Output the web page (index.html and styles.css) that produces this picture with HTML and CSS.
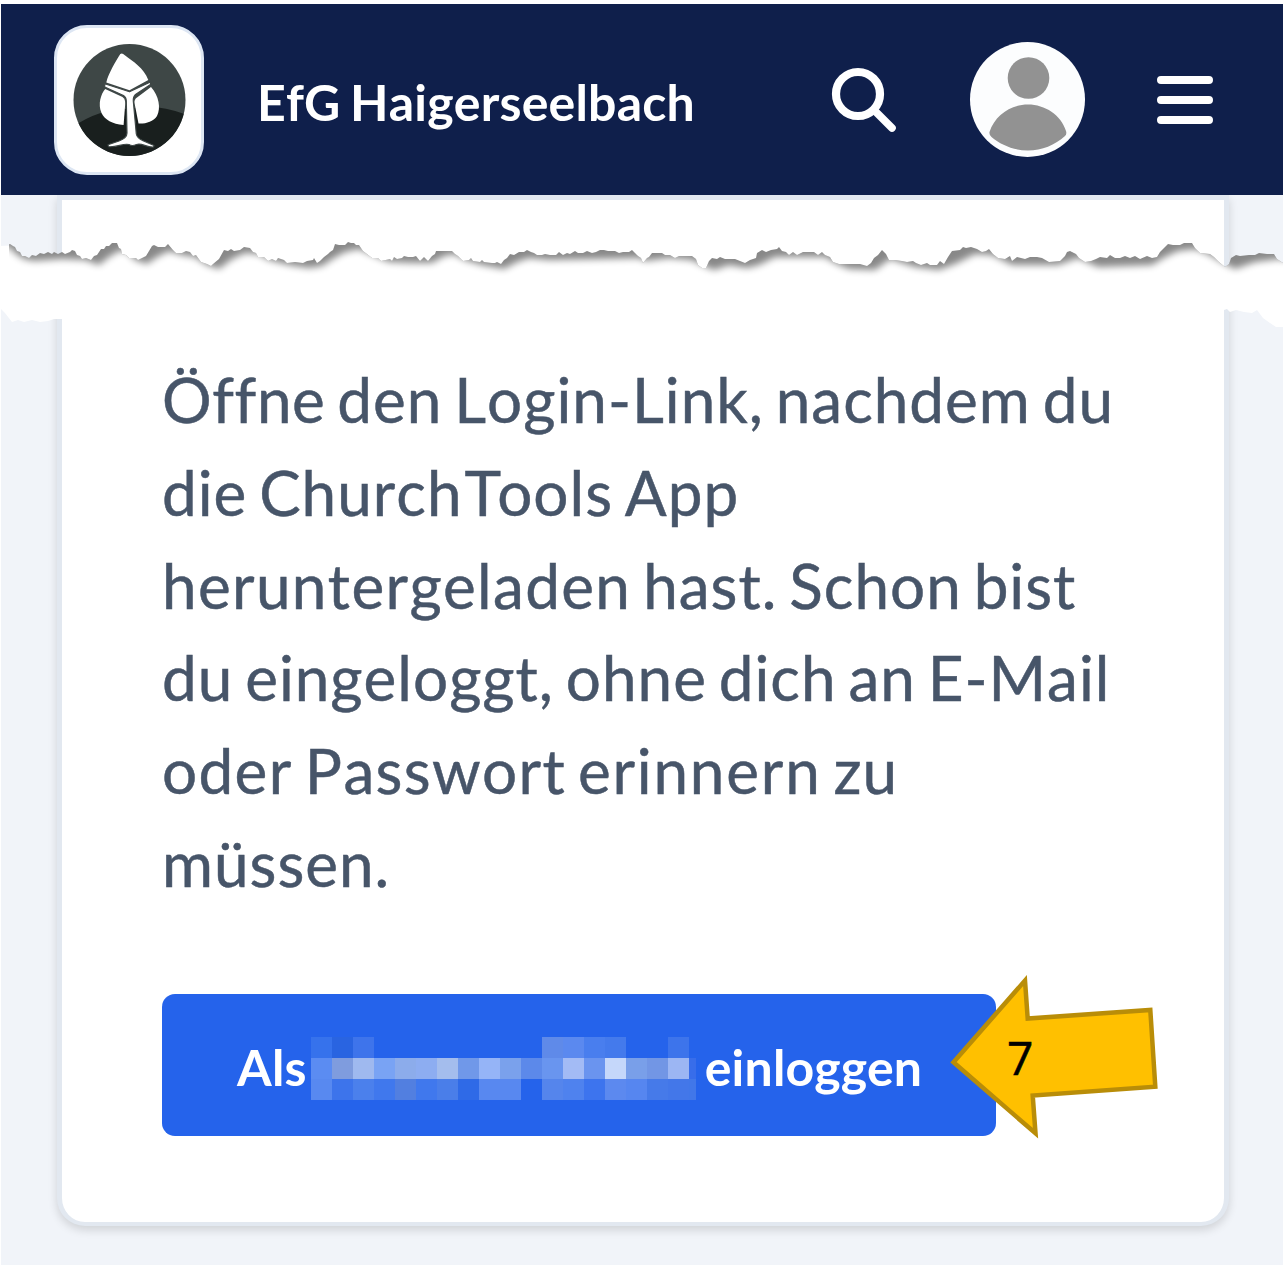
FILE: index.html
```html
<!DOCTYPE html>
<html lang="de">
<head>
<meta charset="utf-8">
<title>EfG Haigerseelbach</title>
<link rel="stylesheet" href="styles.css">
</head>
<body>
<div class="page">
  <header class="topbar">
    <div class="logo">
      <svg viewBox="60 30 140 140" width="140" height="140" aria-hidden="true">
        <defs><clipPath id="disc"><circle cx="129.500" cy="100" r="56"/></clipPath></defs>
        <circle cx="129.500" cy="100" r="56" fill="#3e4746"/>
        <path clip-path="url(#disc)" d="M70 129Q98 108 130 109Q155 102 190 116V160H70Z" fill="#191f1e"/>
        <path fill="#fff" d="M120.300 54Q122.300 52.600 124.500 55C133 61.500 144 68 148.300 80L129.500 90.300L106.300 82.500C108.500 73 116 61 120.300 54Z"/>
        <path fill="#fff" d="M105.200 89L122.500 97Q125.500 99 125.200 104L123.600 125C112 124 105 120 101.500 113C97.500 104 101 94 105.200 89Z"/>
        <path fill="#fff" d="M151 87C159 96 161 108 157 116C153 122 146 123.800 138.500 123.500L134.500 103Q134 99.500 137 97.500Z"/>
        <path fill="#fff" stroke="#3e4746" stroke-width="1.200" stroke-linejoin="round" d="M104.700 83.800L129.500 91.800L150.500 82L150.500 84.500L135.500 94.500Q133 97 133.300 101L136.300 134Q137 138 143 140.700L154 145.500L153.500 147C146 147.500 142 142.500 136.500 144.500Q132 146.500 129 144.500C123 143 117 147.500 108.500 146.700L108 144.700L119 141Q127 138 127 133L126.300 101Q126.300 97.500 123.500 95.500L104.700 87Z"/>
      </svg>
    </div>
    <h1 class="title">EfG Haigerseelbach</h1>
    <nav class="actions">
      <svg class="search" viewBox="0 0 66 66" width="66" height="66" aria-label="Suche">
        <circle cx="27" cy="27" r="22" fill="none" stroke="#fff" stroke-width="8.200"/>
        <path d="M43 43L61 61" stroke="#fff" stroke-width="7.600" stroke-linecap="round"/>
      </svg>
      <svg class="avatar" viewBox="0 0 116 116" width="116" height="116" aria-label="Profil">
        <circle cx="57.500" cy="57.500" r="57.500" fill="#fcfdfe"/>
        <circle cx="58.500" cy="36" r="20.800" fill="#929292"/>
        <path fill="#929292" d="M19.500 90C25 73 41 62.500 58 62.500S91 73 96 89Q97 92 95 94C85 103 72 108.500 58 108.500S31 103 21.500 95Q19 93 19.500 90Z"/>
      </svg>
      <svg class="menu" viewBox="0 0 58 50" width="58" height="50" aria-label="Menü">
        <path d="M5 5H53M5 25H53M5 45H53" stroke="#fff" stroke-width="8" stroke-linecap="round"/>
      </svg>
    </nav>
  </header>
  <main class="content">
    <section class="card">
      <p class="copy"><span class="snug">Öffne</span> den Login-Link, nachdem du<br>die Churc<span class="before-cap">h</span><span class="cap">T</span>ools App<br><span class="loose">heruntergeladen</span> hast. Schon bist<br>du eingeloggt, ohne dich an E-Mail<br><span class="loose">oder Passwort</span> <span class="looser">erinnern</span> zu<br>müssen.</p>
      <button class="login" type="button">
        <span>Als</span>
        <svg class="mosaic" viewBox="0 0 385 63" width="385" height="63" shape-rendering="crispEdges" aria-hidden="true">
          <path fill="#3672ec" d="M0 0h21v21h-21z"/><path fill="#2964e1" d="M21 0h21v21h-21z"/><path fill="#3e74eb" d="M42 0h21v21h-21z"/>
          <path fill="#5f8ae9" d="M231 0h21v21h-21z"/><path fill="#5b89ef" d="M252 0h21v21h-21z"/><path fill="#497eee" d="M273 0h21v21h-21z"/><path fill="#447aec" d="M294 0h21v21h-21z"/><path fill="#3d74eb" d="M357 0h21v21h-21z"/>
          <path fill="#5b8cf2" d="M0 21h21v21h-21z"/><path fill="#7f9cde" d="M21 21h21v21h-21z"/><path fill="#9fb9ef" d="M42 21h21v21h-21z"/><path fill="#79a3f4" d="M63 21h21v21h-21z"/><path fill="#8caceb" d="M84 21h21v21h-21z"/><path fill="#8dadf1" d="M105 21h21v21h-21z"/><path fill="#a4bded" d="M126 21h21v21h-21z"/><path fill="#7098e9" d="M147 21h21v21h-21z"/><path fill="#95b4f7" d="M168 21h21v21h-21z"/><path fill="#7aa1ec" d="M189 21h21v21h-21z"/><path fill="#5c89ea" d="M210 21h21v21h-21z"/><path fill="#6995ef" d="M231 21h21v21h-21z"/><path fill="#a3bbf5" d="M252 21h21v21h-21z"/><path fill="#6a94ef" d="M273 21h21v21h-21z"/><path fill="#c5d7fa" d="M294 21h21v21h-21z"/><path fill="#799fe9" d="M315 21h21v21h-21z"/><path fill="#7296e5" d="M336 21h21v21h-21z"/><path fill="#9cb6f3" d="M357 21h21v21h-21z"/><path fill="#386dea" d="M378 21h7v21h-7z"/>
          <path fill="#5889f0" d="M0 42h21v21h-21z"/><path fill="#3d74eb" d="M21 42h21v21h-21z"/><path fill="#4b80ec" d="M42 42h21v21h-21z"/><path fill="#4078ed" d="M63 42h21v21h-21z"/><path fill="#527fe0" d="M84 42h21v21h-21z"/><path fill="#4078ed" d="M105 42h21v21h-21z"/><path fill="#4a7ee9" d="M126 42h21v21h-21z"/><path fill="#2f6ae7" d="M147 42h21v21h-21z"/><path fill="#5888f0" d="M168 42h42v21h-42z"/><path fill="#5585ec" d="M231 42h21v21h-21z"/><path fill="#4f82ee" d="M252 42h21v21h-21z"/><path fill="#3d74ee" d="M273 42h21v21h-21z"/><path fill="#5c89ef" d="M294 42h21v21h-21z"/><path fill="#5686f0" d="M315 42h21v21h-21z"/><path fill="#467ae9" d="M336 42h21v21h-21z"/><path fill="#4377e9" d="M357 42h21v21h-21z"/><path fill="#4177e9" d="M378 42h7v21h-7z"/>
        </svg>
        <span>einloggen</span>
      </button>
    </section>
  </main>
  <svg class="tear" viewBox="0 235 1283 100" width="1283" height="100" aria-hidden="true">
    <defs>
      <clipPath id="paper">
        <path d="M0 246L7 245L10 244L13 246L15 247L17 251L20 252L22 256L25 256L29 258L32 255L36 256L40 253L44 254L48 252L52 254L54 252L58 254L62 252L65 254L70 252L72 250L75 251L77 255L80 256L82 259L86 258L91 260L94 256L97 255L101 249L104 249L106 246L109 246L112 243L117 243L119 248L121 249L122 254L126 255L129 258L136 258L138 260L142 258L146 256L152 246L154 245L158 247L162 247L165 247L168 244L173 250L176 253L182 253L186 251L190 252L193 256L196 255L201 262L207 264L211 266L213 264L219 259L224 250L228 251L231 249L234 251L240 250L244 247L250 248L253 252L256 253L258 257L264 257L268 261L272 259L276 261L278 258L284 260L287 263L295 262L303 263L307 261L313 260L314 258L317 263L320 261L324 257L328 254L330 252L333 250L335 244L339 245L345 245L348 242L351 243L354 243L356 245L359 245L363 251L367 254L372 258L378 258L381 261L390 259L392 261L394 257L397 259L402 258L404 256L408 257L413 257L416 256L420 261L424 257L428 261L432 256L435 254L436 251L441 251L452 251L455 254L458 256L463 261L469 260L471 258L473 261L480 262L482 260L484 262L492 263L495 263L497 262L501 264L504 260L507 258L510 254L514 255L519 252L524 252L527 250L531 252L534 253L537 255L542 255L545 254L550 255L556 255L559 252L563 255L567 253L570 254L575 251L578 253L583 253L587 251L592 253L596 252L600 250L604 250L608 251L615 251L619 253L623 252L629 252L632 250L635 253L638 256L641 258L643 263L647 258L649 257L652 253L662 253L665 255L670 255L675 258L679 256L688 256L692 256L696 259L698 265L702 268L706 268L709 261L712 258L717 259L720 257L725 259L735 259L740 261L745 263L750 260L756 258L757 253L762 250L766 252L771 250L777 249L779 247L782 251L786 252L789 255L793 252L797 255L803 252L810 252L814 252L818 255L822 252L825 255L830 257L833 262L839 264L847 264L854 264L860 264L867 266L871 263L874 258L878 255L882 250L886 254L889 260L895 260L902 261L907 262L913 261L916 263L921 265L927 263L930 265L937 265L940 261L944 264L948 257L952 251L960 250L963 247L966 248L971 247L977 249L982 252L986 251L989 249L993 254L998 258L1005 259L1010 256L1012 261L1017 257L1025 259L1030 257L1037 257L1042 258L1049 262L1060 261L1065 256L1067 252L1070 251L1076 254L1079 258L1085 262L1091 261L1096 259L1100 257L1107 258L1110 255L1115 258L1120 258L1125 256L1130 258L1135 256L1140 259L1147 256L1152 258L1157 257L1160 252L1164 248L1168 244L1173 245L1180 245L1184 243L1192 243L1195 248L1200 253L1210 254L1214 257L1219 262L1225 267L1229 264L1231 258L1236 255L1240 256L1249 255L1255 255L1259 253L1267 254L1274 254L1277 259L1283 263V290H0Z"/>
      </clipPath>
      <filter id="soft" x="-2%" y="-20%" width="104%" height="140%"><feGaussianBlur stdDeviation="3.600"/></filter>
    </defs>
    <path fill="#fff" d="M1 285H1283V327L1276 327L1270 323L1263 318L1257 310L1252 313L1244 312L1236 310L1230 312L1227 309L1224 310H62V319H54L48 321L40 322L32 320L24 322L18 320L12 322L5 313L1 309Z"/>
    <path fill="#fff" d="M0 246H10V290H0Z"/>
    <g clip-path="url(#paper)">
      <path fill="#888" d="M9 235H1283V300H9Z"/>
      <path fill="#fff" filter="url(#soft)" transform="translate(2 0)" d="M-20 247H7L14 254L22 259L32 261L60 259L83 260L97 265L107 257L117 251L124 251L133 260L145 264L155 257L167 251L180 255L193 257L205 265L217 269L230 259L243 253L256 254L267 260L287 265L307 268L320 266L332 258L343 252L357 249L368 254L387 262L410 263L430 263L442 256L452 254L463 260L480 265L502 269L515 262L527 258L547 260L597 259L637 258L643 261L667 258L690 260L702 266L712 270L727 265L745 268L757 265L773 257L800 257L823 257L835 264L847 269L873 270L888 259L913 267L937 270L953 264L973 254L990 255L1010 265L1056 265L1076 258L1096 267L1150 265L1163 257L1176 251L1193 249L1206 254L1223 264L1233 269L1253 262L1276 259L1303 262V365H-20Z"/>
    </g>
  </svg>
  <div class="pointer">
    <svg viewBox="945 970 220 174" width="220" height="174" aria-hidden="true">
      <path d="M953.500 1062.300L1025 980.500L1027.700 1018.500L1150.300 1010L1155.300 1086.700L1032.700 1095.500L1035.500 1133.300Z" fill="#ffc000" stroke="#b98d08" stroke-width="4.500"/>
    </svg>
    <span class="step">7</span>
  </div>
</div>
</body>
</html>
```
FILE: styles.css
```css
* {
  box-sizing: border-box;
}

body {
  margin: 0;
  background: #fff;
  font-family: Lato, "Liberation Sans", sans-serif;
}

.page {
  position: relative;
  width: 1283px;
  height: 1265px;
  padding: 4px 0 0 1px;
  overflow: hidden;
}

.topbar {
  position: relative;
  display: flex;
  align-items: center;
  height: 191px;
  padding: 0 69px 0 53px;
  background: #0f1f4b;
}

.logo {
  display: grid;
  place-items: center;
  width: 150px;
  height: 150px;
  border: 3px solid #dde6f3;
  border-radius: 33px;
  background: #fff;
}

.logo svg {
  margin-left: 1px;
}

.title {
  margin: 4px 0 0 53px;
  color: #fff;
  font-size: 50px;
  font-weight: 700;
  line-height: 60px;
  letter-spacing: 0.2px;
  word-spacing: -3px;
  font-kerning: none;
  white-space: nowrap;
}

.actions {
  display: flex;
  align-items: center;
  margin-left: auto;
}

.search {
  margin-right: 73px;
}

.menu {
  margin-left: 70px;
}

.content {
  height: 1070px;
  padding: 0 54px 0 56px;
  background: #f1f4f9;
}

.card {
  height: 1031px;
  padding: 153px 0 0 100px;
  border: 5px solid #e2e8f0;
  border-bottom-width: 4px;
  border-radius: 0 0 28px 28px;
  background: #fff;
  box-shadow: 0 4px 10px rgba(0, 0, 0, 0.14);
}

.copy {
  margin: 0;
  color: #475569;
  font-size: 62px;
  line-height: 92.800px;
  letter-spacing: 1px;
  word-spacing: -5px;
  font-kerning: none;
  font-variant-ligatures: none;
  white-space: nowrap;
  -webkit-text-stroke: 0.5px #475569;
}

.snug {
  letter-spacing: 0.6px;
}

.loose {
  letter-spacing: 1.35px;
}

.looser {
  letter-spacing: 1.8px;
}

.before-cap {
  letter-spacing: 3px;
}

.cap {
  letter-spacing: -4px;
}

.login {
  display: flex;
  align-items: center;
  width: 834px;
  height: 142px;
  margin-top: 84px;
  padding: 4px 75px 0;
  border: 0;
  border-radius: 13px;
  background: #2563eb;
  color: #fff;
  font: 700 50px/60px Lato, "Liberation Sans", sans-serif;
  letter-spacing: 0.2px;
}

.mosaic {
  position: relative;
  top: 2px;
  flex: none;
  margin: 0 9px 0 4px;
}

.tear {
  position: absolute;
  top: 235px;
  left: 0;
}

.pointer {
  position: absolute;
  top: 970px;
  left: 945px;
}

.step {
  position: absolute;
  top: 55px;
  left: 62px;
  color: #000;
  font: 46px/64px "Open Sans", sans-serif;
  -webkit-text-stroke: 0.6px #000;
}
```
